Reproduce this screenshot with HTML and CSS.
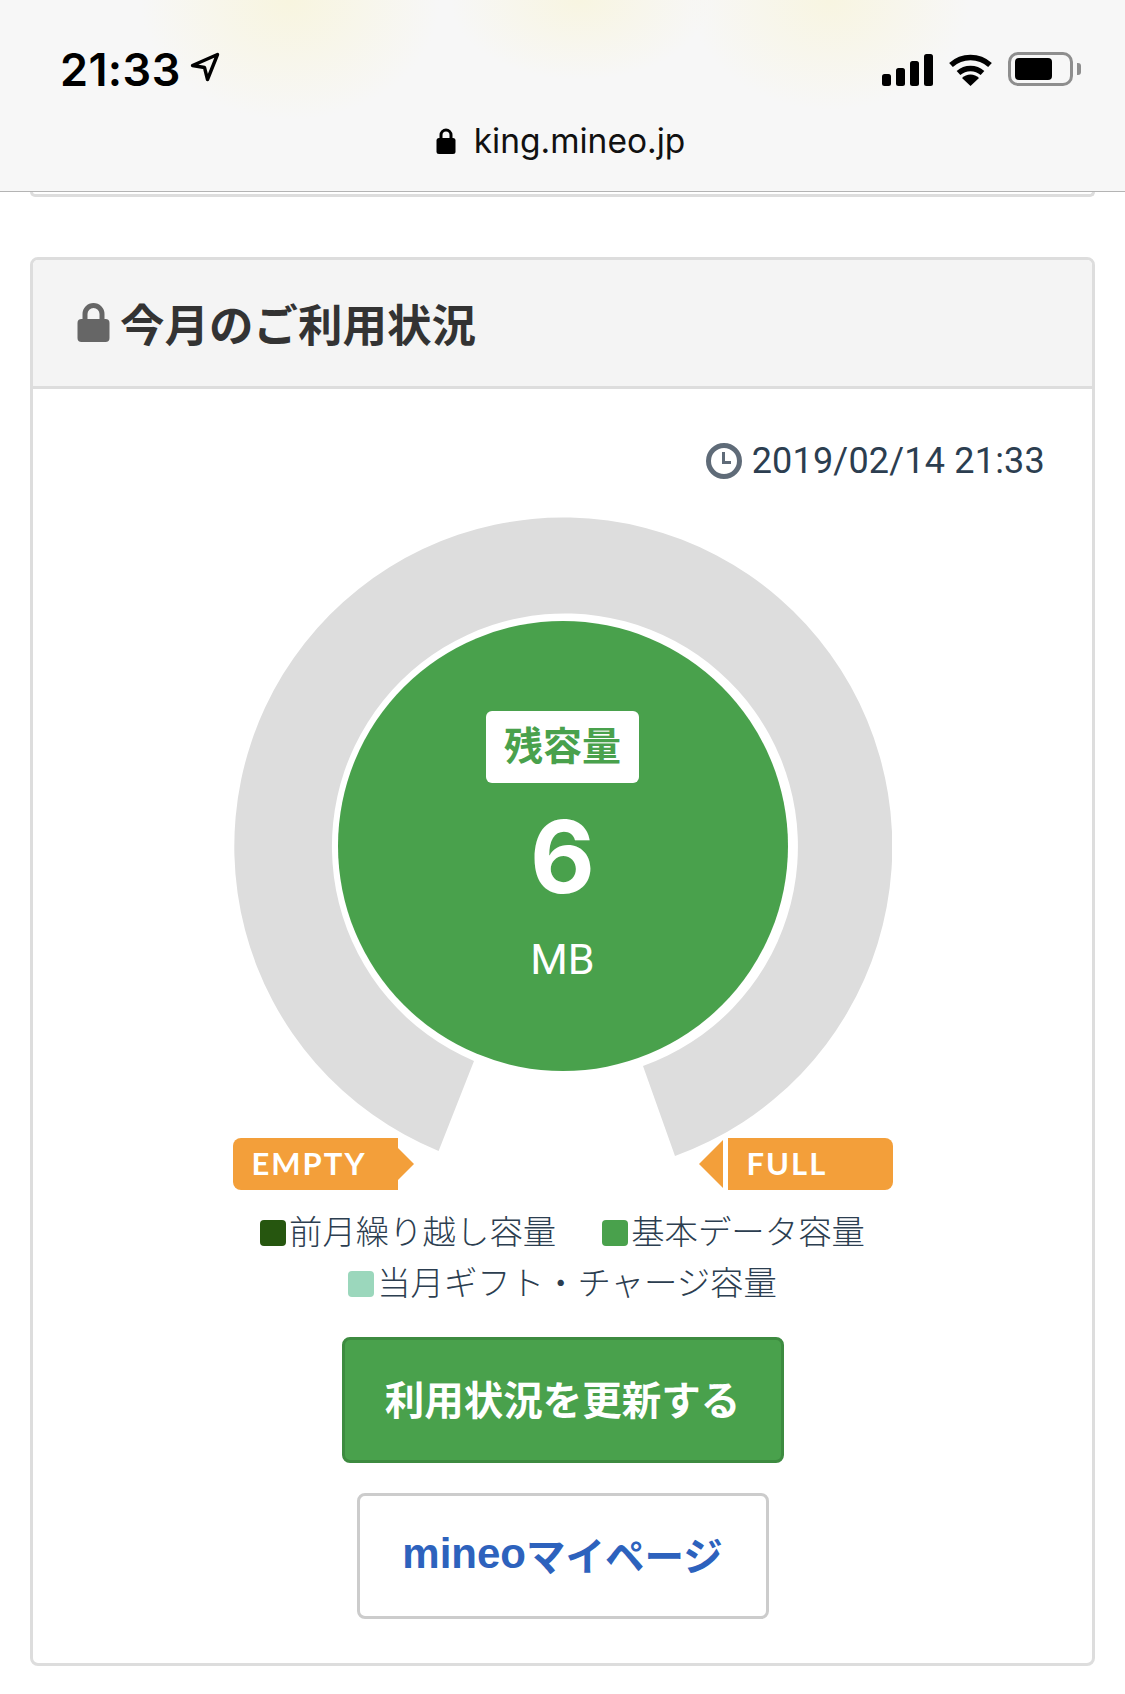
FILE: index.html
```html
<!DOCTYPE html>
<html lang="ja">
<head>
  <meta charset="utf-8">
  <title>今月のご利用状況</title>
  <link rel="stylesheet" href="styles.css">
</head>
<body>

<div class="topbar">
  <div class="status">
    <div class="clock-group">
      <span class="time">21:33</span>
      <svg class="arrow" width="30" height="30" viewBox="0 0 30 30"><path d="M2.5 13.5 L27.5 2.5 L17.5 27.5 L14.5 15.5 Z" fill="none" stroke="#000" stroke-width="3.4" stroke-linejoin="round"/></svg>
    </div>
    <div class="indicators">
      <svg width="51" height="33" viewBox="0 0 51 33">
        <rect x="0" y="21" width="9" height="12" rx="2.5"/>
        <rect x="14" y="15" width="9" height="18" rx="2.5"/>
        <rect x="28" y="8" width="9" height="25" rx="2.5"/>
        <rect x="42" y="1" width="9" height="32" rx="2.5"/>
      </svg>
      <svg width="45" height="33" viewBox="0 0 45 33">
        <path d="M3 12 A29 29 0 0 1 42 12" fill="none" stroke="#000" stroke-width="5.5"/>
        <path d="M10.5 20 A18 18 0 0 1 34.5 20" fill="none" stroke="#000" stroke-width="5.5"/>
        <path d="M22.5 33 L14 25 A12 12 0 0 1 31 25 Z"/>
      </svg>
      <div class="battery">
        <div class="battery-body"><div class="battery-level"></div></div>
        <div class="battery-cap"></div>
      </div>
    </div>
  </div>
  <div class="url">
    <svg width="20" height="26" viewBox="0 0 20 26"><path d="M5 12 V7 A5 5 0 0 1 15 7 V12" fill="none" stroke="#000" stroke-width="3"/><rect x="0.5" y="10" width="19" height="16" rx="2.5"/></svg>
    <span>king.mineo.jp</span>
  </div>
</div>

<div class="prev-card"></div>

<div class="card">
  <div class="card-header">
    <svg width="33" height="39" viewBox="0 0 33 39"><path d="M8 18 V11 A8.5 8.5 0 0 1 25 11 V18" fill="none" stroke="#666" stroke-width="5"/><rect x="0.5" y="16" width="32" height="23" rx="4" fill="#666"/></svg>
    <h2>今月のご利用状況</h2>
  </div>

  <div class="card-body">
    <div class="updated">
      <svg width="36" height="36" viewBox="0 0 36 36"><circle cx="18" cy="18" r="15.5" fill="none" stroke="#5f6b78" stroke-width="5"/><path d="M17.5 9 V19.5 H25" fill="none" stroke="#5f6b78" stroke-width="3"/></svg>
      <span>2019/02/14 21:33</span>
    </div>

    <div class="gauge">
      <svg class="gauge-ring" width="658" height="660" viewBox="0 0 658 660">
        <path d="M204.6 634 A329 329 0 1 1 441 639 L409 549 A233 233 0 1 0 240 544 Z" fill="#ddd"/>
      </svg>
      <div class="gauge-center">
        <div class="remain-label">残容量</div>
        <div class="remain-value">6</div>
        <div class="remain-unit">MB</div>
      </div>
    </div>

    <div class="tags">
      <div class="tag tag-empty">EMPTY</div>
      <div class="tag tag-full">FULL</div>
    </div>

    <div class="legend">
      <div class="legend-row">
        <span class="legend-item"><i class="swatch swatch-prev"></i>前月繰り越し容量</span>
        <span class="legend-item"><i class="swatch swatch-base"></i>基本データ容量</span>
      </div>
      <div class="legend-row">
        <span class="legend-item"><i class="swatch swatch-gift"></i>当月ギフト・チャージ容量</span>
      </div>
    </div>

    <a class="btn btn-update">利用状況を更新する</a>
    <a class="btn btn-mypage"><span class="brand">mineo</span>マイページ</a>
  </div>
</div>

</body>
</html>
```

FILE: styles.css
```css
* {
  box-sizing: border-box;
}

body {
  margin: 0;
  background: #fff;
  color: #2c3e50;
  font-family: Roboto, "Noto Sans CJK JP", sans-serif;
}

/* browser chrome */
.topbar {
  height: 192px;
  padding-top: 42px;
  border-bottom: 1px solid #b4b4b4;
  background:
    radial-gradient(ellipse 150px 120px at 290px 0, #f8f5df, rgba(248, 245, 223, 0)),
    radial-gradient(ellipse 130px 80px at 580px 0, #f8f5e1, rgba(248, 245, 225, 0)),
    radial-gradient(ellipse 140px 110px at 830px 0, #f8f5e1, rgba(248, 245, 225, 0)),
    #f7f7f7;
}

.status {
  display: flex;
  justify-content: space-between;
  align-items: center;
  height: 54px;
  padding: 0 44px 0 60px;
}

.clock-group {
  display: flex;
  align-items: center;
  gap: 9px;
}

.time {
  font-family: Inter, sans-serif;
  font-size: 45px;
  font-weight: 600;
  letter-spacing: 0.4px;
  color: #000;
}

.arrow {
  margin-top: -4px;
}

.indicators {
  display: flex;
  align-items: center;
  gap: 15px;
}

.battery {
  display: flex;
  align-items: center;
  gap: 4px;
}

.battery-body {
  width: 65px;
  height: 34px;
  padding: 3px 4px;
  border: 3px solid #8e8e8e;
  border-radius: 10px;
}

.battery-level {
  width: 37px;
  height: 22px;
  background: #000;
  border-radius: 4px;
}

.battery-cap {
  width: 4px;
  height: 12px;
  background: #8e8e8e;
  border-radius: 0 3px 3px 0;
}

.url {
  display: flex;
  justify-content: center;
  align-items: center;
  gap: 18px;
  height: 52px;
  margin-top: 19px;
  padding-right: 4px;
  font-family: Inter, sans-serif;
  font-size: 33.5px;
  color: #111;
}

/* cards */
.prev-card {
  height: 5px;
  margin: 0 30px 60px;
  border: 3px solid #ddd;
  border-top: none;
  border-radius: 0 0 8px 8px;
}

.card {
  margin: 0 30px;
  border: 3px solid #ddd;
  border-radius: 8px;
}

.card-header {
  display: flex;
  align-items: center;
  gap: 10px;
  height: 129px;
  padding: 0 0 2px 44px;
  background: #f4f4f4;
  border-bottom: 3px solid #ddd;
  border-radius: 5px 5px 0 0;
}

.card-header h2 {
  margin: 0;
  font-size: 44.5px;
  font-weight: 700;
  color: #333;
}

.card-body {
  display: flex;
  flex-direction: column;
  align-items: center;
  padding-bottom: 44px;
}

.updated {
  display: flex;
  align-items: center;
  justify-content: flex-end;
  gap: 10px;
  align-self: stretch;
  height: 44px;
  margin-top: 50px;
  padding-right: 47px;
  font-size: 36px;
  letter-spacing: 0.2px;
}

/* gauge */
.gauge {
  position: relative;
  width: 658px;
  height: 621px;
  margin-top: 34px;
  flex-shrink: 0;
}

.gauge-ring {
  position: absolute;
  left: 0;
  top: 0;
}

.gauge-center {
  position: absolute;
  left: 104px;
  top: 104px;
  width: 450px;
  height: 450px;
  border-radius: 50%;
  background: #49a14c;
  color: #fff;
  display: flex;
  flex-direction: column;
  align-items: center;
}

.remain-label {
  width: 153px;
  height: 72px;
  margin-top: 90px;
  background: #fff;
  border-radius: 6px;
  color: #49a14c;
  font-size: 39px;
  font-weight: 700;
  line-height: 72px;
  text-align: center;
}

.remain-value {
  height: 100px;
  margin-top: 24px;
  font-family: Inter, sans-serif;
  font-size: 100px;
  font-weight: 700;
  line-height: 100px;
}

.remain-unit {
  margin-top: 27px;
  font-size: 43px;
  line-height: 50px;
}

/* tags under the gauge */
.tags {
  display: flex;
  justify-content: space-between;
  width: 660px;
  position: relative;
  z-index: 1;
}

.tag {
  position: relative;
  height: 52px;
  background: #f39f3a;
  color: #fff;
  font-family: Lato, sans-serif;
  font-size: 31px;
  font-weight: 700;
  letter-spacing: 2px;
  line-height: 50px;
}

.tag-empty {
  width: 165px;
  padding-left: 19px;
  border-radius: 8px 0 0 8px;
}

.tag-empty::after {
  content: "";
  position: absolute;
  left: 100%;
  top: 10px;
  border-left: 16px solid #f39f3a;
  border-top: 16px solid transparent;
  border-bottom: 16px solid transparent;
}

.tag-full {
  width: 165px;
  padding-left: 19px;
  border-radius: 0 8px 8px 0;
}

.tag-full::before {
  content: "";
  position: absolute;
  right: calc(100% + 5px);
  top: 2px;
  border-right: 24px solid #f39f3a;
  border-top: 24px solid transparent;
  border-bottom: 24px solid transparent;
}

/* legend */
.legend {
  margin-top: 17px;
  font-size: 33.4px;
  font-weight: 300;
  line-height: 51px;
}

.legend-row {
  display: flex;
  justify-content: center;
  gap: 46px;
}

.legend-item {
  display: flex;
  align-items: center;
  gap: 3px;
}

.swatch {
  display: block;
  width: 26px;
  height: 26px;
  border-radius: 4px;
}

.swatch-prev {
  background: #26560f;
}

.swatch-base {
  background: #49a14c;
}

.swatch-gift {
  background: #9bd7bc;
}

/* buttons */
.btn {
  display: flex;
  justify-content: center;
  align-items: center;
  height: 126px;
  padding-bottom: 5px;
  border-radius: 8px;
  border: 3px solid;
  font-size: 39.5px;
  font-weight: 700;
}

.btn-update {
  width: 442px;
  margin-top: 28px;
  background: #49a14c;
  border-color: #3d8b40;
  color: #fff;
}

.btn-mypage {
  width: 412px;
  margin-top: 30px;
  background: #fff;
  border-color: #ccc;
  color: #2d62bd;
}

.brand {
  font-family: "Liberation Sans", sans-serif;
  font-size: 42px;
}
```
